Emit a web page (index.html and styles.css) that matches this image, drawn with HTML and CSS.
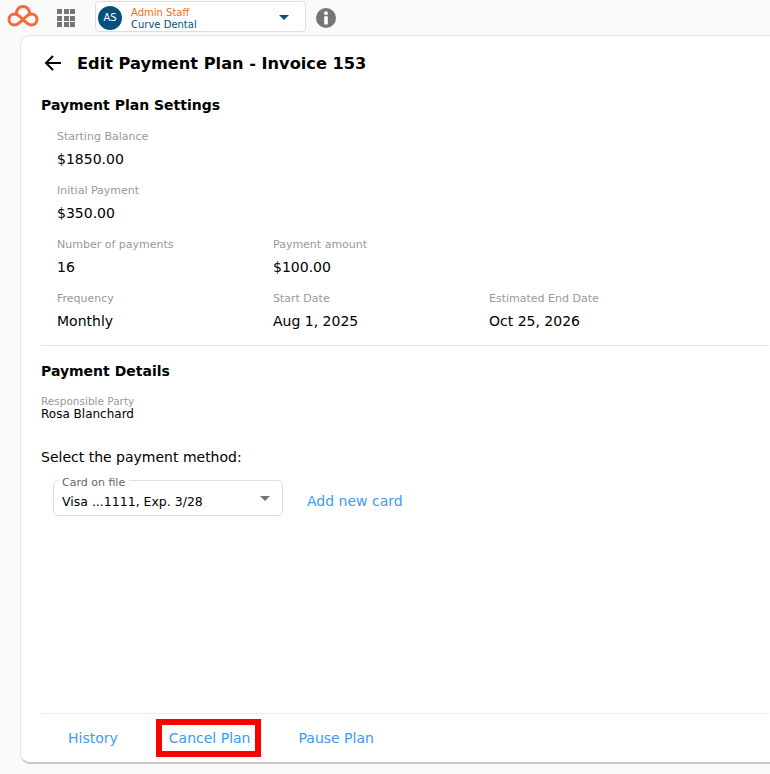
FILE: index.html
```html
<!DOCTYPE html>
<html>

<head>
	<meta charset="UTF-8">
	<title>Edit Payment Plan</title>
	<link rel="stylesheet" href="styles.css">
</head>

<body>
	<div class="topbar">
		<svg class="logo" width="32" height="24" viewBox="0 0 32 24">
			<path d="M7.500 21 a5.500 5.500 0 0 1 0 -11 C11.500 10 13 13 16 15.500 C19 18 20.500 21 24.500 21 a5.500 5.500 0 0 0 0 -11 C20.500 10 19 13 16 15.500 C13 18 11.500 21 7.500 21 Z" fill="none" stroke="#f26b3a" stroke-width="3" />
			<path d="M9.800 11 A6.500 6.500 0 1 1 22.200 11" fill="none" stroke="#f26b3a" stroke-width="3" />
		</svg>
		<div class="apps">
			<i></i><i></i><i></i><i></i><i></i><i></i><i></i><i></i><i></i>
		</div>
		<div class="userBox">
			<div class="avatar">AS</div>
			<div class="userText">
				<div class="userName">Admin Staff</div>
				<div class="userOrg">Curve Dental</div>
			</div>
			<div class="userCaret"></div>
		</div>
		<svg class="info" width="20" height="20" viewBox="0 0 20 20">
			<circle cx="10" cy="10" r="10" fill="#757575" />
			<circle cx="10" cy="5.200" r="1.900" fill="#fff" />
			<rect x="8.200" y="8.300" width="3.600" height="8.200" fill="#fff" />
		</svg>
	</div>

	<div class="card">
		<div class="header">
			<svg class="back" width="20" height="20" viewBox="0 0 20 20">
				<path d="M18 10 H3 M10 3 L3 10 L10 17" fill="none" stroke="#000" stroke-width="2" />
			</svg>
			<h1>Edit Payment Plan - Invoice 153</h1>
		</div>

		<h2 class="sectionTitle">Payment Plan Settings</h2>
		<div class="fields">
			<div class="field"><label>Starting Balance</label><span>$1850.00</span></div>
			<div class="field fullRow"><label>Initial Payment</label><span>$350.00</span></div>
			<div class="field newRow"><label>Number of payments</label><span>16</span></div>
			<div class="field"><label>Payment amount</label><span>$100.00</span></div>
			<div class="field newRow"><label>Frequency</label><span>Monthly</span></div>
			<div class="field"><label>Start Date</label><span>Aug 1, 2025</span></div>
			<div class="field"><label>Estimated End Date</label><span>Oct 25, 2026</span></div>
		</div>

		<div class="divider"></div>

		<h2 class="sectionTitle detailsTitle">Payment Details</h2>
		<div class="party">
			<label>Responsible Party</label>
			<span>Rosa Blanchard</span>
		</div>

		<p class="selectLabel">Select the payment method:</p>
		<div class="methodRow">
			<div class="select">
				<div class="selectLegend">Card on file</div>
				<div class="selectValue">Visa ...1111, Exp. 3/28</div>
				<div class="selectCaret"></div>
			</div>
			<a class="link addCard">Add new card</a>
		</div>

		<div class="footer">
			<a class="link footLink">History</a>
			<a class="link footLink highlighted">Cancel Plan</a>
			<a class="link footLink">Pause Plan</a>
		</div>
	</div>
</body>

</html>
```

FILE: styles.css
```css
body {
	font-family: "DejaVu Sans", Verdana, sans-serif;
	font-size: 14px;
	color: #000;
	background: #fafafa;
	margin: 0;
	width: 770px;
	height: 774px;
	overflow: hidden;
	display: flex;
	flex-direction: column;
}

.topbar {
	height: 35px;
	flex: none;
	display: flex;
	align-items: flex-start;
}

.logo {
	margin: 4px 0 0 7px;
}

.apps {
	display: grid;
	grid-template-columns: repeat(3, 5px);
	grid-auto-rows: 5px;
	gap: 1.500px;
	margin: 9px 0 0 18px;
	width: 18px;
}

.apps i {
	background: #757575;
}

.userBox {
	width: 211px;
	height: 31px;
	margin: 1px 0 0 20px;
	background: #fff;
	border: 1px solid #ddd;
	border-radius: 4px;
	display: flex;
	align-items: center;
	box-sizing: border-box;
}

.avatar {
	width: 24px;
	height: 24px;
	margin: 3px 0 0 2px;
	border-radius: 50%;
	background: #03507f;
	color: #fff;
	font-size: 10px;
	line-height: 24px;
	text-align: center;
}

.userText {
	margin: 4px 0 0 9px;
	flex: 1;
	font-size: 10px;
	line-height: 12px;
}

.userName {
	color: #f26b21;
}

.userOrg {
	color: #03507f;
}

.userCaret {
	border-left: 5px solid transparent;
	border-right: 5px solid transparent;
	border-top: 5px solid #03507f;
	margin: 2px 16px 0 0;
}

.info {
	margin: 8px 0 0 10px;
}

.card {
	flex: 1;
	margin: 0 -20px 10px 20px;
	background: #fff;
	border-radius: 10px 0 0 10px;
	border: 1px solid #e4e4e4;
	border-bottom: 2px solid #c8c8c8;
	padding: 0 20px;
	display: flex;
	flex-direction: column;
}

.header {
	display: flex;
	align-items: center;
	height: 54px;
}

.back {
	margin-left: 2px;
}

h1 {
	font-size: 16.200px;
	font-weight: bold;
	margin: 0 0 0 14px;
}

.sectionTitle {
	font-size: 14px;
	font-weight: bold;
	margin: 0;
	line-height: 18px;
	padding-top: 6px;
}

.fields {
	display: grid;
	grid-template-columns: repeat(3, 216px);
	padding: 16px 0 0 16px;
	row-gap: 15px;
}

.field label,
.party label {
	display: block;
	font-size: 11px;
	color: #999;
	line-height: 14px;
}

.field span {
	display: block;
	margin-top: 6px;
	line-height: 19px;
}

.fullRow {
	grid-column: 1 / 4;
}

.newRow {
	grid-column-start: 1;
}

.divider {
	height: 1px;
	background: #e4e4e4;
	margin-top: 14px;
}

.detailsTitle {
	padding-top: 16px;
}

.party {
	margin-top: 15px;
}

.party label {
	font-size: 10.500px;
	line-height: 13px;
}

.party span {
	display: block;
	font-size: 12px;
	line-height: 12px;
}

.selectLabel {
	margin: 28px 0 0;
	line-height: 18px;
}

.methodRow {
	display: flex;
	align-items: center;
	margin-top: 14px;
	padding-left: 12px;
}

.select {
	position: relative;
	width: 230px;
	height: 36px;
	box-sizing: border-box;
	border: 1px solid #ddd;
	border-radius: 5px;
	display: flex;
	align-items: center;
}

.selectLegend {
	position: absolute;
	top: -4px;
	left: 4px;
	padding: 0 4px;
	background: #fff;
	color: #666;
	font-size: 11px;
	line-height: 12px;
}

.selectValue {
	margin: 7px 0 0 8px;
	font-size: 12.500px;
}

.selectCaret {
	position: absolute;
	top: 15px;
	right: 12px;
	border-left: 5px solid transparent;
	border-right: 5px solid transparent;
	border-top: 5px solid #757575;
}

.link {
	color: #3c9bf0;
}

.addCard {
	margin: 6px 0 0 24px;
}

.footer {
	margin-top: auto;
	border-top: 1px solid #ececec;
	height: 48px;
	padding-left: 16px;
	display: flex;
	align-items: center;
	gap: 27px;
}

.footLink {
	padding: 0 11px;
	line-height: 30px;
}

.highlighted {
	border: 6px solid #f00;
	padding: 0 5px 0 7px;
	margin-right: -1px;
	line-height: 26px;
}
```
